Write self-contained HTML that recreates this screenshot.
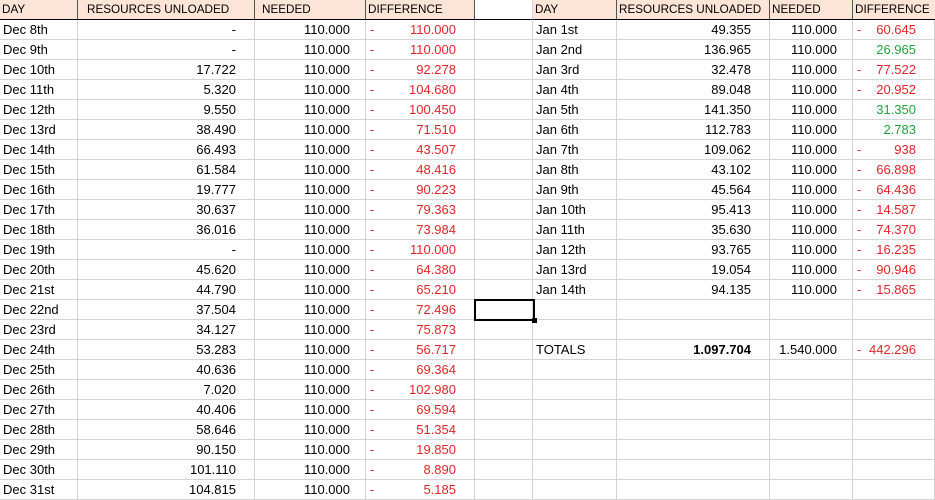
<!DOCTYPE html>
<html><head><meta charset="utf-8"><style>
body{margin:0;background:#fff;font-family:"Liberation Sans",Arial,sans-serif;font-size:13px;color:#000;}
table{border-collapse:separate;border-spacing:0;table-layout:fixed;width:935px;position:absolute;left:0;top:0}
td{height:19px;padding:0 3px;border-right:1px solid #d4d4d4;border-bottom:1px solid #d4d4d4;white-space:nowrap;overflow:hidden;line-height:19px;}
tr.h td{background:#fce4d6;border-bottom:1px solid #000;border-right:1px solid #555;font-size:11.7px;padding:0 2px}
tr.h td.g{background:#fff;border-right:1px solid #d4d4d4}
.r{text-align:right;padding-right:18px}
.n{text-align:right;padding-right:15px}
.d{color:#e0262a}
.d span{float:left;padding-left:1px}
.p{color:#1fa33c}
b{font-weight:bold}
.sel{position:absolute;left:474px;top:299px;width:57px;height:18px;border:2px solid #000}
.sel:after{content:"";position:absolute;right:-4px;bottom:-4px;width:5px;height:5px;background:#000}
</style></head><body>
<table>
<col style="width:78px"><col style="width:177px"><col style="width:111px"><col style="width:109px"><col style="width:58px"><col style="width:84px"><col style="width:153px"><col style="width:83px"><col style="width:82px">
<tr class="h"><td>DAY</td><td style="padding-left:9px">RESOURCES UNLOADED</td><td style="padding-left:7px">NEEDED</td><td>DIFFERENCE</td><td class="g"></td><td>DAY</td><td>RESOURCES UNLOADED</td><td>NEEDED</td><td style="border-right:none">DIFFERENCE</td></tr>
<tr><td>Dec 8th</td><td class="r">-</td><td class="n">110.000</td><td class="d r"><span>-</span>110.000</td><td></td><td>Jan 1st</td><td class="r">49.355</td><td class="n">110.000</td><td class="d r"><span>-</span>60.645</td></tr>
<tr><td>Dec 9th</td><td class="r">-</td><td class="n">110.000</td><td class="d r"><span>-</span>110.000</td><td></td><td>Jan 2nd</td><td class="r">136.965</td><td class="n">110.000</td><td class="p r">26.965</td></tr>
<tr><td>Dec 10th</td><td class="r">17.722</td><td class="n">110.000</td><td class="d r"><span>-</span>92.278</td><td></td><td>Jan 3rd</td><td class="r">32.478</td><td class="n">110.000</td><td class="d r"><span>-</span>77.522</td></tr>
<tr><td>Dec 11th</td><td class="r">5.320</td><td class="n">110.000</td><td class="d r"><span>-</span>104.680</td><td></td><td>Jan 4th</td><td class="r">89.048</td><td class="n">110.000</td><td class="d r"><span>-</span>20.952</td></tr>
<tr><td>Dec 12th</td><td class="r">9.550</td><td class="n">110.000</td><td class="d r"><span>-</span>100.450</td><td></td><td>Jan 5th</td><td class="r">141.350</td><td class="n">110.000</td><td class="p r">31.350</td></tr>
<tr><td>Dec 13rd</td><td class="r">38.490</td><td class="n">110.000</td><td class="d r"><span>-</span>71.510</td><td></td><td>Jan 6th</td><td class="r">112.783</td><td class="n">110.000</td><td class="p r">2.783</td></tr>
<tr><td>Dec 14th</td><td class="r">66.493</td><td class="n">110.000</td><td class="d r"><span>-</span>43.507</td><td></td><td>Jan 7th</td><td class="r">109.062</td><td class="n">110.000</td><td class="d r"><span>-</span>938</td></tr>
<tr><td>Dec 15th</td><td class="r">61.584</td><td class="n">110.000</td><td class="d r"><span>-</span>48.416</td><td></td><td>Jan 8th</td><td class="r">43.102</td><td class="n">110.000</td><td class="d r"><span>-</span>66.898</td></tr>
<tr><td>Dec 16th</td><td class="r">19.777</td><td class="n">110.000</td><td class="d r"><span>-</span>90.223</td><td></td><td>Jan 9th</td><td class="r">45.564</td><td class="n">110.000</td><td class="d r"><span>-</span>64.436</td></tr>
<tr><td>Dec 17th</td><td class="r">30.637</td><td class="n">110.000</td><td class="d r"><span>-</span>79.363</td><td></td><td>Jan 10th</td><td class="r">95.413</td><td class="n">110.000</td><td class="d r"><span>-</span>14.587</td></tr>
<tr><td>Dec 18th</td><td class="r">36.016</td><td class="n">110.000</td><td class="d r"><span>-</span>73.984</td><td></td><td>Jan 11th</td><td class="r">35.630</td><td class="n">110.000</td><td class="d r"><span>-</span>74.370</td></tr>
<tr><td>Dec 19th</td><td class="r">-</td><td class="n">110.000</td><td class="d r"><span>-</span>110.000</td><td></td><td>Jan 12th</td><td class="r">93.765</td><td class="n">110.000</td><td class="d r"><span>-</span>16.235</td></tr>
<tr><td>Dec 20th</td><td class="r">45.620</td><td class="n">110.000</td><td class="d r"><span>-</span>64.380</td><td></td><td>Jan 13rd</td><td class="r">19.054</td><td class="n">110.000</td><td class="d r"><span>-</span>90.946</td></tr>
<tr><td>Dec 21st</td><td class="r">44.790</td><td class="n">110.000</td><td class="d r"><span>-</span>65.210</td><td></td><td>Jan 14th</td><td class="r">94.135</td><td class="n">110.000</td><td class="d r"><span>-</span>15.865</td></tr>
<tr><td>Dec 22nd</td><td class="r">37.504</td><td class="n">110.000</td><td class="d r"><span>-</span>72.496</td><td></td><td></td><td></td><td></td><td></td></tr>
<tr><td>Dec 23rd</td><td class="r">34.127</td><td class="n">110.000</td><td class="d r"><span>-</span>75.873</td><td></td><td></td><td></td><td></td><td></td></tr>
<tr><td>Dec 24th</td><td class="r">53.283</td><td class="n">110.000</td><td class="d r"><span>-</span>56.717</td><td></td><td>TOTALS</td><td class="r"><b>1.097.704</b></td><td class="n">1.540.000</td><td class="d r"><span>-</span>442.296</td></tr>
<tr><td>Dec 25th</td><td class="r">40.636</td><td class="n">110.000</td><td class="d r"><span>-</span>69.364</td><td></td><td></td><td></td><td></td><td></td></tr>
<tr><td>Dec 26th</td><td class="r">7.020</td><td class="n">110.000</td><td class="d r"><span>-</span>102.980</td><td></td><td></td><td></td><td></td><td></td></tr>
<tr><td>Dec 27th</td><td class="r">40.406</td><td class="n">110.000</td><td class="d r"><span>-</span>69.594</td><td></td><td></td><td></td><td></td><td></td></tr>
<tr><td>Dec 28th</td><td class="r">58.646</td><td class="n">110.000</td><td class="d r"><span>-</span>51.354</td><td></td><td></td><td></td><td></td><td></td></tr>
<tr><td>Dec 29th</td><td class="r">90.150</td><td class="n">110.000</td><td class="d r"><span>-</span>19.850</td><td></td><td></td><td></td><td></td><td></td></tr>
<tr><td>Dec 30th</td><td class="r">101.110</td><td class="n">110.000</td><td class="d r"><span>-</span>8.890</td><td></td><td></td><td></td><td></td><td></td></tr>
<tr><td>Dec 31st</td><td class="r">104.815</td><td class="n">110.000</td><td class="d r"><span>-</span>5.185</td><td></td><td></td><td></td><td></td><td></td></tr>
</table>
<div class="sel"></div>
</body></html>
